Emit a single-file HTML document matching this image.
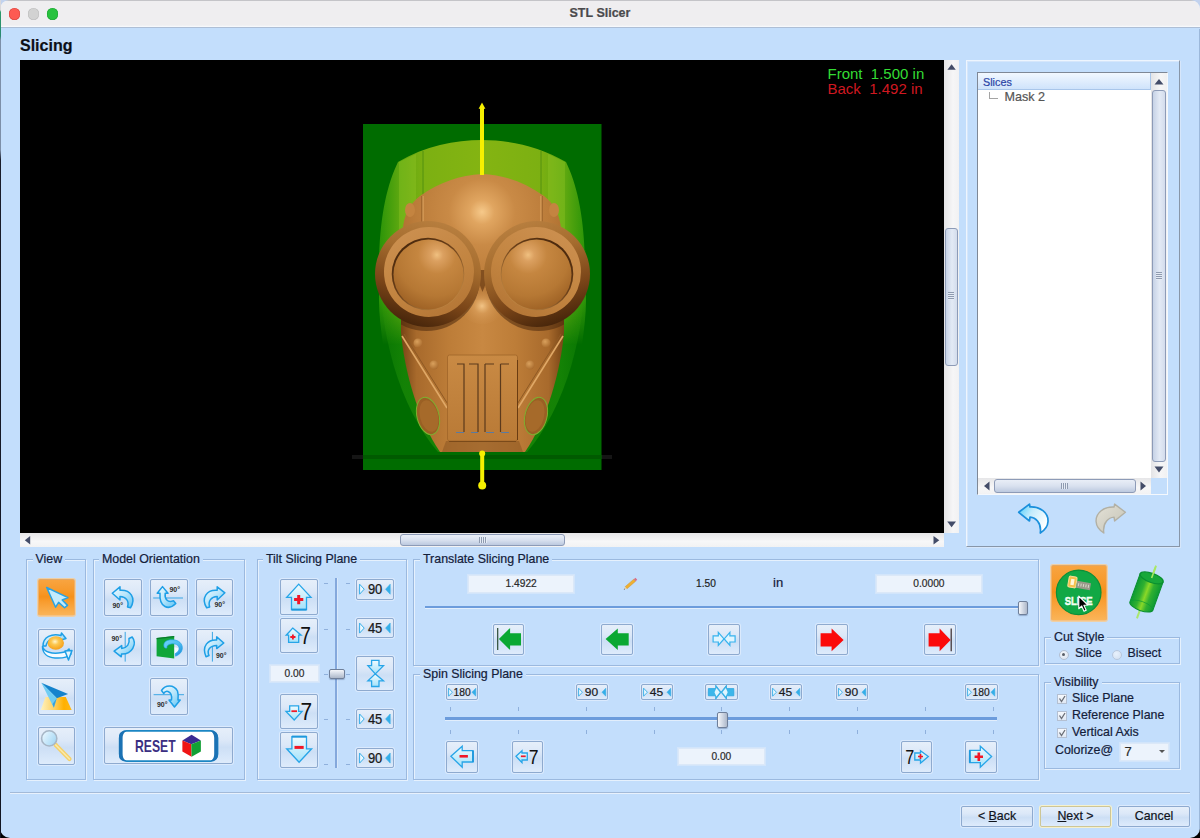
<!DOCTYPE html>
<html>
<head>
<meta charset="utf-8">
<title>STL Slicer</title>
<style>
html,body{margin:0;padding:0;}
body{width:1200px;height:838px;overflow:hidden;background:linear-gradient(#c2d2ee 0,#c2d2ee 20px,#000 20px);font-family:"Liberation Sans",sans-serif;font-size:12.4px;color:#14203a;-webkit-text-stroke:0.2px;}
#win{position:absolute;left:0;top:0;width:1200px;height:838px;background:#c3defc;border-radius:9px 9px 10px 10px;overflow:hidden;}
#edge{position:absolute;left:0;top:0;width:1px;height:838px;background:linear-gradient(#d8d8dc 0,#d8d8dc 10px,#2a9a6a 12px,#2a8a70 36px,#7d8fa8 40px,#7d8fa8 150px,#1a1d2a 160px,#111522 100%);z-index:5;}
#title{position:absolute;left:0;top:0;width:1200px;height:28px;background:linear-gradient(#c4c4c8 0,#c4c4c8 1px,#efeef0 1px,#efeef0 25px,#f6f8fb 26.500px,#aebfd6 27.500px,#aebfd6 28px);box-sizing:border-box;}
#title .t{position:absolute;left:0;width:1200px;top:6px;text-align:center;font-weight:bold;font-size:12.500px;color:#4a4a4c;}
.dot{position:absolute;top:8.300px;width:11.600px;height:11.600px;border-radius:50%;}
.abs{position:absolute;}
.grp{position:absolute;border:1px solid #9bb9df;box-shadow:1px 1px 0 #e6f1fd, inset 1px 1px 0 #e6f1fd;box-sizing:border-box;}
.grp>.lbl{position:absolute;top:-8.300px;background:#c3defc;padding:0 3px;font-size:12.4px;line-height:15px;white-space:nowrap;color:#14203a;}
.btn{position:absolute;box-sizing:border-box;border:1px solid #8eaacf;border-radius:2px;background:linear-gradient(#e6effa 0%,#dce8f8 35%,#cddff5 55%,#d6e6f9 80%,#deebfb 100%);box-shadow:0 0 0 1px rgba(230,240,253,.7);}
.btn svg{position:absolute;left:-1px;top:-1px;overflow:visible;}
.fld{position:absolute;box-sizing:border-box;background:#ecf3fc;border:1px solid #dbe8f8;box-shadow:0 0 0 1px #d2e5fb;font-size:10.200px;text-align:center;color:#2a2a2a;}
.tick{position:absolute;background:#8fb0dc;}
.txt{position:absolute;white-space:nowrap;line-height:15px;}
.vth{box-sizing:border-box;border:1px solid #8d9bb7;border-radius:3px;background:linear-gradient(90deg,#c6d2e6,#e3eaf5 55%,#d3dcec);}
.hth{box-sizing:border-box;border:1px solid #8d9bb7;border-radius:3px;background:linear-gradient(#e9eef7,#d9e1ef 50%,#bcc9df);}
.thumb{box-sizing:border-box;border:1px solid #6f7f99;border-radius:2px;background:linear-gradient(90deg,#f4f6fa,#c9d1de 60%,#aeb8c9);box-shadow:0 1px 1px rgba(60,80,120,.35);}
.radio{box-sizing:border-box;width:10px;height:10px;border-radius:50%;background:radial-gradient(circle at 40% 35%,#f4f8fd,#d6dfec);border:1px solid #b4c0d2;}
.radio i{position:absolute;left:2.200px;top:2.200px;width:3.600px;height:3.600px;border-radius:50%;background:#5a5f68;}
.chk{box-sizing:border-box;width:10px;height:10px;background:linear-gradient(#f6f9fd,#e0e8f3);border:1px solid #b4c0d2;}
.chk svg{position:absolute;left:-1px;top:-1px;}
.fb{font-size:12.4px;text-align:center;line-height:19px;color:#10141c;}
</style>
</head>
<body>
<div id="win">
<svg width="0" height="0" style="position:absolute;left:0;top:0"><defs><linearGradient id="ab" x1="0" y1="0" x2="1" y2="1"><stop offset="0" stop-color="#eefaff"/><stop offset="0.500" stop-color="#b9e6fb"/><stop offset="1" stop-color="#5fc4f4"/></linearGradient><linearGradient id="ab2" x1="0" y1="0" x2="1" y2="1"><stop offset="0" stop-color="#6fd4fa"/><stop offset="0.500" stop-color="#4fbff2"/><stop offset="1" stop-color="#1a8ad8"/></linearGradient><linearGradient id="ur" x1="0" y1="0" x2="1" y2="0.600"><stop offset="0" stop-color="#48ccfa"/><stop offset="0.450" stop-color="#c4ecfc"/><stop offset="1" stop-color="#ffffff"/></linearGradient><linearGradient id="hb" x1="0" y1="0" x2="0" y2="1"><stop offset="0" stop-color="#f0fbff"/><stop offset="0.500" stop-color="#c9eefc"/><stop offset="1" stop-color="#a4e2fa"/></linearGradient><linearGradient id="gr" x1="0" y1="0" x2="1" y2="1"><stop offset="0" stop-color="#e4e2d8"/><stop offset="1" stop-color="#c4c2b4"/></linearGradient><radialGradient id="orb" cx="0.450" cy="0.400" r="0.650"><stop offset="0" stop-color="#fff6d0"/><stop offset="0.350" stop-color="#fcc850"/><stop offset="1" stop-color="#f59a10"/></radialGradient><linearGradient id="org" x1="0" y1="0" x2="1" y2="0"><stop offset="0" stop-color="#fff2c0"/><stop offset="0.450" stop-color="#fdd060"/><stop offset="0.750" stop-color="#ffb000"/><stop offset="1" stop-color="#ffb818"/></linearGradient><linearGradient id="lens" x1="0" y1="0" x2="1" y2="0.600"><stop offset="0" stop-color="#f2faff"/><stop offset="0.600" stop-color="#c4e6fa"/><stop offset="1" stop-color="#a8d8f4"/></linearGradient><linearGradient id="cylg" x1="0" y1="0" x2="1" y2="0"><stop offset="0" stop-color="#0c9a34"/><stop offset="0.300" stop-color="#30b030"/><stop offset="0.500" stop-color="#8ad828"/><stop offset="0.700" stop-color="#30b030"/><stop offset="1" stop-color="#0c9a34"/></linearGradient></defs></svg>
<div id="title">
  <div class="dot" style="left:8.500px;background:#fd5a52;box-shadow:inset 0 0 0 0.600px #d8453e;"></div>
  <div class="dot" style="left:27.500px;background:#d2d2d2;box-shadow:inset 0 0 0 0.600px #bdbdbd;"></div>
  <div class="dot" style="left:46.700px;background:#27c23e;box-shadow:inset 0 0 0 0.600px #1da533;"></div>
  <div class="t">STL Slicer</div>
</div>
<div class="txt" style="left:20px;top:36px;font-size:16px;font-weight:bold;line-height:20px;color:#0c0f18;">Slicing</div>
<div id="vp" class="abs" style="left:20px;top:60px;width:925px;height:473px;background:#000;overflow:hidden;">
<svg width="925" height="473" viewBox="20 60 925 473" style="position:absolute;left:0;top:0">
<defs>
<linearGradient id="domeg" x1="0" x2="1" y1="0" y2="0">
 <stop offset="0" stop-color="#2a9408"/><stop offset="0.100" stop-color="#5ea810"/><stop offset="0.220" stop-color="#7cb012"/><stop offset="0.500" stop-color="#84b412"/><stop offset="0.780" stop-color="#7cb012"/><stop offset="0.900" stop-color="#5ea810"/><stop offset="1" stop-color="#2a9408"/>
</linearGradient>
<linearGradient id="sideg" x1="0" x2="1" y1="0" y2="0">
 <stop offset="0" stop-color="#0f7e05"/><stop offset="0.120" stop-color="#2c9c0c"/><stop offset="0.500" stop-color="#3aa510"/><stop offset="0.880" stop-color="#2c9c0c"/><stop offset="1" stop-color="#0f7e05"/>
</linearGradient>
<radialGradient id="headg" cx="482" cy="212" r="95" gradientUnits="userSpaceOnUse">
 <stop offset="0" stop-color="#f6c98a"/><stop offset="0.130" stop-color="#e0a560"/><stop offset="0.350" stop-color="#c98a46"/><stop offset="0.700" stop-color="#bb7c3a"/><stop offset="1" stop-color="#a86a2c"/>
</radialGradient>
<linearGradient id="faceg" x1="400" x2="565" y1="0" y2="0" gradientUnits="userSpaceOnUse">
 <stop offset="0" stop-color="#744214"/><stop offset="0.100" stop-color="#a86a2c"/><stop offset="0.300" stop-color="#bd7d38"/><stop offset="0.500" stop-color="#c88842"/><stop offset="0.700" stop-color="#bd7d38"/><stop offset="0.900" stop-color="#a86a2c"/><stop offset="1" stop-color="#744214"/>
</linearGradient>
<linearGradient id="ringg" x1="0.700" y1="0" x2="0.350" y2="1">
 <stop offset="0" stop-color="#b98040"/><stop offset="0.350" stop-color="#a56c2e"/><stop offset="0.700" stop-color="#7a4518"/><stop offset="1" stop-color="#45240a"/>
</linearGradient>
<linearGradient id="flatg" x1="0.200" y1="0" x2="0.700" y2="1">
 <stop offset="0" stop-color="#cc9050"/><stop offset="0.600" stop-color="#c28440"/><stop offset="1" stop-color="#b47636"/>
</linearGradient>
<radialGradient id="lensg" cx="0.620" cy="0.220" r="0.900">
 <stop offset="0" stop-color="#f0c080"/><stop offset="0.100" stop-color="#dba060"/><stop offset="0.300" stop-color="#c58640"/><stop offset="0.650" stop-color="#b67834"/><stop offset="1" stop-color="#95591f"/>
</radialGradient>
<radialGradient id="noseg" cx="482" cy="306" r="22" gradientUnits="userSpaceOnUse">
 <stop offset="0" stop-color="#f2c486"/><stop offset="0.350" stop-color="#d89c58" stop-opacity="0.800"/><stop offset="1" stop-color="#c98a46" stop-opacity="0"/>
</radialGradient>
<radialGradient id="rivg" cx="0.400" cy="0.350" r="0.700">
 <stop offset="0" stop-color="#d9a05c"/><stop offset="1" stop-color="#a86a2c"/>
</radialGradient>
<linearGradient id="grillg" x1="0" x2="0" y1="0" y2="1">
 <stop offset="0" stop-color="#c98a44"/><stop offset="1" stop-color="#b97a36"/>
</linearGradient>
<linearGradient id="dfade" x1="0" x2="0" y1="140" y2="345" gradientUnits="userSpaceOnUse"><stop offset="0" stop-color="#fff"/><stop offset="0.780" stop-color="#fff"/><stop offset="1" stop-color="#000"/></linearGradient>
<mask id="dmask" maskUnits="userSpaceOnUse" x="360" y="120" width="250" height="240"><rect x="360" y="120" width="250" height="240" fill="url(#dfade)"/></mask>
<linearGradient id="outg" x1="0.150" y1="0.100" x2="0.850" y2="0.900"><stop offset="0" stop-color="#4a280c"/><stop offset="0.450" stop-color="#6e421a"/><stop offset="1" stop-color="#c08844"/></linearGradient>
<clipPath id="faceclip"><path d="M404 240 C400 222 408 205 420 196 C440 182 460 175 482 174 C504 175 524 182 544 196 C556 205 564 222 560 240 L560 300 L404 300 Z"/><path d="M401 300 L401 332 C404 370 418 420 440 452 L525 452 C547 420 561 370 564 332 L564 300 Z"/></clipPath>
<clipPath id="gclip"><rect x="363" y="124" width="238.500" height="346"/></clipPath>
</defs>
<!-- shadow band -->
<rect x="352" y="455" width="260" height="4" fill="#151515"/>
<!-- slice plane -->
<rect x="363" y="124" width="238.500" height="346" fill="#006c00"/>
<!-- lower translucent sides -->
<path d="M379 250 C378 330 398 405 438 452 L527 452 C567 405 587 330 586 250 Z" fill="url(#sideg)" opacity="0.450"/>
<!-- dome translucent -->
<path d="M379 262 C380 215 387 185 398 162 C425 146 455 140 482 140 C509 140 539 146 566 162 C577 185 584 215 585 262 L586 300 C586 315 584 330 582 345 L383 345 C381 330 379 315 379 300 Z" fill="url(#domeg)" mask="url(#dmask)"/>
<path d="M399 162 L416 154 L416 240 L399 240 Z" fill="#96c828" opacity="0.350"/>
<path d="M548 154 L565 162 L565 240 L548 240 Z" fill="#96c828" opacity="0.350"/>
<line x1="423" y1="151" x2="423" y2="225" stroke="#4a8a10" stroke-width="0.800"/>
<line x1="541" y1="151" x2="541" y2="225" stroke="#4a8a10" stroke-width="0.800"/>
<rect x="363" y="455" width="238.500" height="4" fill="#005a00"/>
<!-- head dome -->
<path d="M404 240 C400 222 408 205 420 196 C440 182 460 175 482 174 C504 175 524 182 544 196 C556 205 564 222 560 240 L560 300 L404 300 Z" fill="url(#headg)"/>
<ellipse cx="410" cy="210" rx="5" ry="7" fill="#c48440"/>
<ellipse cx="554" cy="210" rx="5" ry="7" fill="#c48440"/>
<line x1="423" y1="196" x2="423" y2="222" stroke="#e2aa66" stroke-width="1"/>
<line x1="421.800" y1="196" x2="421.800" y2="222" stroke="#8a5622" stroke-width="0.700"/>
<line x1="541" y1="196" x2="541" y2="222" stroke="#e2aa66" stroke-width="1"/>
<line x1="542.200" y1="196" x2="542.200" y2="222" stroke="#8a5622" stroke-width="0.700"/>
<!-- lower face -->
<path d="M401 300 L401 332 C404 370 418 420 440 452 L525 452 C547 420 561 370 564 332 L564 300 Z" fill="url(#faceg)"/>
<ellipse cx="482" cy="306" rx="22" ry="18" fill="url(#noseg)"/>
<!-- straps -->
<path d="M402 336 L447 408" stroke="#e0a866" stroke-width="1.600" fill="none"/>
<path d="M404 334 L449 406" stroke="#8f5a24" stroke-width="1" fill="none"/>
<path d="M563 336 L518 408" stroke="#e0a866" stroke-width="1.600" fill="none"/>
<path d="M561 334 L516 406" stroke="#8f5a24" stroke-width="1" fill="none"/>
<!-- rivets -->
<circle cx="418" cy="343" r="4.500" fill="url(#rivg)"/><circle cx="434" cy="365" r="4.500" fill="url(#rivg)"/>
<circle cx="546" cy="343" r="4.500" fill="url(#rivg)"/><circle cx="530" cy="365" r="4.500" fill="url(#rivg)"/>
<!-- side ovals -->
<ellipse cx="428" cy="416" rx="11" ry="19" transform="rotate(-14 428 416)" fill="#9a6024" stroke="#7fae30" stroke-width="1"/>
<ellipse cx="536" cy="416" rx="11" ry="19" transform="rotate(14 536 416)" fill="#9a6024" stroke="#7fae30" stroke-width="1"/>
<ellipse cx="429" cy="416" rx="9" ry="16" transform="rotate(-14 429 416)" fill="#a66a2a"/>
<ellipse cx="535" cy="416" rx="9" ry="16" transform="rotate(14 535 416)" fill="#a66a2a"/>
<!-- grille -->
<path d="M446 441 L519 441 L523 452 L442 452 Z" fill="#8a5622" opacity="0.550"/>
<rect x="447.500" y="355" width="70" height="86" rx="2" fill="url(#grillg)" stroke="#a06428" stroke-width="0.800"/>
<line x1="517.500" y1="360" x2="517.500" y2="440" stroke="#6a3c12" stroke-width="1"/>
<line x1="449" y1="441.500" x2="516" y2="441.500" stroke="#7a4a1a" stroke-width="1.200"/>
<g stroke="#5c3a1c" stroke-width="1.200" fill="none">
<path d="M457 364 L464 364 L464 432"/><path d="M469 364 L478 364 L478 432"/><path d="M485 364 L485 432 M485 364 L494 364"/><path d="M500.500 364 L500.500 432 M500.500 364 L509 364"/>
</g>
<path d="M456 432.500 L464 432.500 M471 432.500 L478 432.500 M486 432.500 L494 432.500 M501 432.500 L509 432.500" stroke="#5a7aa0" stroke-width="1.200"/>
<path d="M474 270 L482.500 292 L491 270 Z" fill="#6a3c14" opacity="0.700"/>
<!-- goggles -->
<circle cx="426.500" cy="277.500" r="53.500" fill="#4a280c" opacity="0.550" clip-path="url(#faceclip)"/>
<circle cx="538.500" cy="277.500" r="53.500" fill="#4a280c" opacity="0.550" clip-path="url(#faceclip)"/>
<g id="gog">
<circle cx="428" cy="274" r="53" fill="url(#ringg)"/>
<circle cx="429" cy="272" r="45" fill="url(#flatg)"/>
<circle cx="428" cy="274" r="36.300" fill="url(#outg)"/>
<circle cx="428.500" cy="274.500" r="35" fill="url(#lensg)"/>
</g>
<g transform="translate(965 0) scale(-1 1)">
<circle cx="428" cy="274" r="53" fill="url(#ringg)"/>
<circle cx="429" cy="272" r="45" fill="url(#flatg)"/>
<circle cx="428" cy="274" r="36.300" fill="url(#outg)"/>
<circle cx="428.500" cy="274.500" r="35" fill="url(#lensg)"/>
</g>
<!-- axis -->
<rect x="480" y="107" width="4" height="68" fill="#f6f000"/>
<path d="M478.600 108.800 L482 102.600 L485.400 108.800 Z" fill="#f6f000"/>
<rect x="480.200" y="452" width="4" height="34" fill="#f6f000"/>
<circle cx="482.200" cy="485.500" r="4" fill="#f6f000"/><circle cx="482.200" cy="453.500" r="3" fill="#f6f000"/>
<text x="827.500" y="78.700" font-family="Liberation Sans, sans-serif" font-size="15" fill="#34dc34" xml:space="preserve">Front  1.500 in</text>
<text x="827.500" y="93.800" font-family="Liberation Sans, sans-serif" font-size="15" fill="#d01820" xml:space="preserve">Back  1.492 in</text>
</svg>

</div>

<div class="abs" style="left:944px;top:60px;width:15px;height:473px;background:linear-gradient(90deg,#e4e4e6,#f6f6f7 60%,#f1f1f2);"></div>
<svg class="abs" style="left:944px;top:60px" width="15" height="473"><path d="M3.400 9.700 L7.600 4.300 L11.800 9.700 Z" fill="#434c68"/><path d="M3.200 461.600 L7.600 467.200 L12 461.600 Z" fill="#434c68"/></svg>
<div class="abs vth" style="left:945px;top:228px;width:13px;height:138px;"></div>
<div class="abs" style="left:948px;top:292px;width:6px;height:8px;background:repeating-linear-gradient(#8f9bb0 0,#8f9bb0 1px,#e6ecf5 1px,#e6ecf5 2px);"></div>
<div class="abs" style="left:20px;top:533px;width:924px;height:14px;background:linear-gradient(#e6e6e8,#f7f7f8 60%,#f2f2f3);"></div>
<svg class="abs" style="left:20px;top:533px" width="924" height="14"><path d="M10.200 3 L4.800 7.300 L10.200 11.600 Z" fill="#434c68"/><path d="M913.500 3 L919.300 7.300 L913.500 11.600 Z" fill="#434c68"/></svg>
<div class="abs hth" style="left:400px;top:534px;width:165px;height:12px;"></div>
<div class="abs" style="left:479px;top:537px;width:8px;height:6px;background:repeating-linear-gradient(90deg,#8f9bb0 0,#8f9bb0 1px,#e6ecf5 1px,#e6ecf5 2px);"></div>


<div class="abs" style="left:966px;top:60px;width:214px;height:486.500px;box-sizing:border-box;border:1px solid;border-color:#eef5fe #8896a8 #8896a8 #eef5fe;box-shadow:inset 1px 1px 0 #d5e6fb,1px 1px 0 #d6e6fa;"></div>
<div class="abs" style="left:977px;top:72px;width:191px;height:423px;box-sizing:border-box;background:#fff;border:1px solid;border-color:#7f8896 #f4f8fd #f4f8fd #7f8896;"></div>
<div class="abs" style="left:978px;top:73px;width:173px;height:17px;box-sizing:border-box;background:linear-gradient(#f2f8ff,#cfe3fb);border-bottom:1px solid #a9c6ea;border-right:1px solid #a9c6ea;"></div>
<div class="txt" style="left:983px;top:75px;font-size:10.800px;color:#2a44a6;">Slices</div>
<div class="abs" style="left:988.500px;top:91.500px;width:1px;height:6.500px;background:#a4a4a4;"></div>
<div class="abs" style="left:988.500px;top:97.500px;width:9px;height:1px;background:#a4a4a4;"></div>
<div class="txt" style="left:1004.500px;top:90px;font-size:12.600px;color:#555;">Mask 2</div>
<div class="abs" style="left:1151px;top:73px;width:16px;height:405px;background:linear-gradient(90deg,#e4e4e6,#f6f6f7 60%,#f1f1f2);"></div>
<svg class="abs" style="left:1151px;top:73px" width="16" height="405"><path d="M3.500 11.500 L8 6 L12.500 11.500 Z" fill="#434c68"/><path d="M3.500 393.500 L8 399.500 L12.500 393.500 Z" fill="#434c68"/></svg>
<div class="abs vth" style="left:1152px;top:90px;width:14px;height:372px;"></div>
<div class="abs" style="left:1156px;top:272px;width:6px;height:8px;background:repeating-linear-gradient(#8f9bb0 0,#8f9bb0 1px,#e6ecf5 1px,#e6ecf5 2px);"></div>
<div class="abs" style="left:978px;top:478px;width:173px;height:16px;background:linear-gradient(#e6e6e8,#f7f7f8 60%,#f2f2f3);"></div>
<svg class="abs" style="left:978px;top:478px" width="173" height="16"><path d="M11.500 3.500 L6 8 L11.500 12.500 Z" fill="#434c68"/><path d="M162.500 3.500 L168 8 L162.500 12.500 Z" fill="#434c68"/></svg>
<div class="abs hth" style="left:994px;top:479px;width:142px;height:14px;"></div>
<div class="abs" style="left:1061px;top:483px;width:7px;height:6px;background:repeating-linear-gradient(90deg,#8f9bb0 0,#8f9bb0 1px,#e6ecf5 1px,#e6ecf5 2px);"></div>
<div class="abs" style="left:1151px;top:478px;width:16px;height:16px;background:#c3defc;"></div>
<svg class="abs" style="left:1012px;top:498px" width="124" height="42" viewBox="1012 498 124 42"><path d="M1018.700 512.300 L1029.500 504.100 L1030 507 C1040 506.500 1048.500 512.500 1048 521.500 C1047.800 526 1045 530 1040.300 533 C1041 528 1040 524 1037.500 521 C1035.500 518.500 1033 517.300 1030 517.100 L1029.500 521 Z" fill="url(#ur)" stroke="#1b90dc" stroke-width="1.700" stroke-linejoin="round"/><path d="M1125.400 512.300 L1114.600 504.100 L1114.100 507.000 C1104.100 506.500 1095.600 512.500 1096.100 521.500 C1096.300 526.000 1099.100 530.000 1103.800 533.000 C1103.100 528.000 1104.100 524.000 1106.600 521.000 C1108.600 518.500 1111.100 517.300 1114.100 517.100 L1114.600 521.000 Z" fill="url(#gr)" stroke="#b2b0a4" stroke-width="1.400" stroke-linejoin="round"/></svg>
<div class="grp" style="left:26px;top:559px;width:60px;height:221px;"><div class="lbl" style="left:5.5px;">View</div></div>
<div class="grp" style="left:93px;top:559px;width:152px;height:221px;"><div class="lbl" style="left:5px;">Model Orientation</div></div>
<div class="grp" style="left:257px;top:559px;width:150px;height:221px;"><div class="lbl" style="left:5px;">Tilt Slicing Plane</div></div>
<div class="grp" style="left:413px;top:559px;width:626px;height:107px;"><div class="lbl" style="left:6px;">Translate Slicing Plane</div></div>
<div class="grp" style="left:413px;top:674px;width:626px;height:106px;"><div class="lbl" style="left:6px;">Spin Slicing Plane</div></div>
<div class="grp" style="left:1044px;top:637px;width:136px;height:27px;"><div class="lbl" style="left:6px;">Cut Style</div></div>
<div class="grp" style="left:1044px;top:682px;width:136px;height:87px;"><div class="lbl" style="left:6px;">Visibility</div></div>
<div class="btn" style="left:37.6px;top:578.8px;width:37.6px;height:37.4px;background:linear-gradient(#f8a440,#f79a2c 30%,#f6911b 48%,#f89c2e 62%,#fab458);border-color:#e2a866 #eeb06a #f6c283 #eeb06a;box-shadow:0 0 0 1px #f0cfa4;"><svg width="37.6" height="37.4" viewBox="0 0 37.6 37.4"><path d="M8.700 8.500 L30 18.600 L24.200 21 L29.500 26.400 L26.600 28.800 L20.600 23.400 L17.600 28.200 Z" fill="#c4ebfc" stroke="#2aa2e2" stroke-width="1.500" stroke-linejoin="round"/></svg></div>
<div class="btn" style="left:37.6px;top:628.7px;width:37.6px;height:37.4px;"><svg width="37.6" height="37.4" viewBox="0 0 37.6 37.4"><path d="M5 17 C5 8 14 4 23 6.500 L23.500 4 L28 9.500 L21.500 11.500 L22 9.200 C15 8 9 11 8 17 Z" fill="url(#ab)" stroke="#1e9fe6" stroke-width="1.500" stroke-linejoin="round"/><ellipse cx="17.800" cy="14" rx="8.200" ry="6.800" fill="url(#orb)"/><path d="M4.500 17.500 C6 23 14 25.500 24 23.500 C27 23 30 21.500 31 20 L33 25 C30 28 24 29.500 17 29 C9 28.500 4.500 24 4.500 17.500 Z" fill="#f4fbff" stroke="#1e9fe6" stroke-width="1.500" stroke-linejoin="round"/><path d="M27 22 L34 21.500 L30.500 31 Z" fill="#e4f6fe" stroke="#1e9fe6" stroke-width="1.500" stroke-linejoin="round"/></svg></div>
<div class="btn" style="left:37.6px;top:678px;width:37.6px;height:37.4px;"><svg width="37.6" height="37.4" viewBox="0 0 37.6 37.4"><path d="M7.500 19 L27.800 19 L33.700 32 L2.700 32 Z" fill="url(#org)"/><path d="M3.300 4.700 L30.100 16 L18.800 20.200 Z" fill="#1583cc"/><path d="M3.300 4.700 L18.800 20.200 L15.800 29.800 Z" fill="#6fcdf3"/><path d="M18.800 20.200 L15.800 29.800 L14.500 26 Z" fill="#1583cc" opacity="0.600"/></svg></div>
<div class="btn" style="left:37.6px;top:727.3px;width:37.6px;height:37.4px;"><svg width="37.6" height="37.4" viewBox="0 0 37.6 37.4"><path d="M17.500 17.800 L31.500 32" stroke="#f4d06a" stroke-width="4.200" stroke-linecap="round"/><path d="M17.500 17.800 L31.500 32" stroke="#fbe9a8" stroke-width="1.600" stroke-linecap="round"/><circle cx="11.200" cy="11.400" r="7.600" fill="url(#lens)" stroke="#a7b6c6" stroke-width="1.600"/></svg></div>
<div class="btn" style="left:104.4px;top:578.8px;width:37.2px;height:37px;"><svg width="37.2" height="37" viewBox="0 0 37.2 37"><path d="M8.300 14.300 L16 7.800 L16 11.300 C26.500 10.500 32.500 19 26.500 28.800 L23.500 28 C25.500 22 22 17.800 16 17.600 L16 21 Z" fill="url(#ab)" stroke="#1e9fe6" stroke-width="1.500" stroke-linejoin="round"/><text x="8.5" y="29" font-family="Liberation Sans, sans-serif" font-weight="bold" font-size="7" fill="#2a2a2a" textLength="10.500" lengthAdjust="spacingAndGlyphs">90°</text></svg></div>
<div class="btn" style="left:150.4px;top:578.8px;width:37.2px;height:37px;"><svg width="37.2" height="37" viewBox="0 0 37.2 37"><path d="M3.200 19 L33 19" stroke="#3aa6e4" stroke-width="1"/><path d="M12.500 7.600 L18 14.300 L15.200 14.300 C14.500 20 17.500 24 23.500 21.800 L25.800 24.500 C19 31.500 9 29 10 14.300 L7.200 14.300 Z" fill="url(#ab)" stroke="#1e9fe6" stroke-width="1.500" stroke-linejoin="round"/><text x="19.5" y="13" font-family="Liberation Sans, sans-serif" font-weight="bold" font-size="7" fill="#2a2a2a" textLength="10.500" lengthAdjust="spacingAndGlyphs">90°</text></svg></div>
<div class="btn" style="left:196px;top:578.8px;width:37.2px;height:37px;"><svg width="37.2" height="37" viewBox="0 0 37.2 37"><path d="M28.900 13.800 L21.200 7.800 L21.200 11.300 C10.700 10.500 4.700 19 10.700 28.800 L13.700 28 C11.700 22 15.200 17.800 21.200 17.600 L21.200 21 Z" fill="url(#ab)" stroke="#1e9fe6" stroke-width="1.500" stroke-linejoin="round"/><text x="18.5" y="28.5" font-family="Liberation Sans, sans-serif" font-weight="bold" font-size="7" fill="#2a2a2a" textLength="10.500" lengthAdjust="spacingAndGlyphs">90°</text></svg></div>
<div class="btn" style="left:104.4px;top:628.7px;width:37.2px;height:37px;"><svg width="37.2" height="37" viewBox="0 0 37.2 37"><path d="M21.200 2.900 L21.200 32.600" stroke="#3aa6e4" stroke-width="1"/><path d="M10.100 22.100 L17.700 16.600 L17.700 19.500 C23 19 26 15 25 9.500 L28.200 8 C33.500 15 28 25.500 17.500 25 L17.300 27.800 Z" fill="url(#ab)" stroke="#1e9fe6" stroke-width="1.500" stroke-linejoin="round"/><text x="7.5" y="12.5" font-family="Liberation Sans, sans-serif" font-weight="bold" font-size="7" fill="#2a2a2a" textLength="10.500" lengthAdjust="spacingAndGlyphs">90°</text></svg></div>
<div class="btn" style="left:150.4px;top:628.7px;width:37.2px;height:37px;"><svg width="37.2" height="37" viewBox="0 0 37.2 37"><path d="M6.600 9.100 L24.200 7.100 L24.200 29.400 L6.600 27.300 Z" fill="#10a63a"/><path d="M6.600 9.100 L24.200 7.100 L24.200 8.300 L6.600 10.300 Z" fill="#0a7a2a"/><path d="M24.600 18.300 L30.400 19.500 C29.800 22.800 27.600 25 24.600 26.600 Z" fill="#f4fbff"/><path d="M14 17.500 C13 13 17 10.500 23 10.800 C29 11 33 15 32.300 20 C31.800 23.500 29 26 25.600 27.200 L25 24.800 C28 23 29.500 21 29 18.500 C28 15 24 14.500 21 15 C18 15.500 16.500 17 17 19 C15.500 19.500 14.300 18.800 14 17.500 Z" fill="url(#ab2)" stroke="#1e9fe6" stroke-width="0.600"/></svg></div>
<div class="btn" style="left:196px;top:628.7px;width:37.2px;height:37px;"><svg width="37.2" height="37" viewBox="0 0 37.2 37"><path d="M16.400 2.900 L16.400 32.600" stroke="#3aa6e4" stroke-width="1"/><path d="M27.800 14 L20.700 7.900 L20.700 11 C12 10.500 5.500 17 10 27.800 L13 26.500 C10.500 21 14 16.800 20.700 16.600 L20.700 19.600 Z" fill="url(#ab)" stroke="#1e9fe6" stroke-width="1.500" stroke-linejoin="round"/><text x="20" y="29.5" font-family="Liberation Sans, sans-serif" font-weight="bold" font-size="7" fill="#2a2a2a" textLength="10.500" lengthAdjust="spacingAndGlyphs">90°</text></svg></div>
<div class="btn" style="left:150.4px;top:678px;width:37.2px;height:37px;"><svg width="37.2" height="37" viewBox="0 0 37.2 37"><path d="M3.600 16.700 L34 16.700" stroke="#3aa6e4" stroke-width="1"/><path d="M11.500 12.500 C15 6.500 24 6 27.500 13 C28.500 16 28.300 19 28 22 L30.200 22 L24.500 29 L19 22 L21.500 22 C22 18 21 14.500 18 13.500 C16 13 14.500 14 13.800 15.500 Z" fill="url(#ab)" stroke="#1e9fe6" stroke-width="1.500" stroke-linejoin="round"/><text x="7" y="28.8" font-family="Liberation Sans, sans-serif" font-weight="bold" font-size="7" fill="#2a2a2a" textLength="10.500" lengthAdjust="spacingAndGlyphs">90°</text></svg></div>
<div class="btn" style="left:104.3px;top:727.2px;width:128.8px;height:37.3px;"><svg width="128.8" height="37.3" viewBox="0 0 128.8 37.3"><rect x="15.600" y="3.900" width="98" height="30.200" rx="7" fill="#fff" stroke="#1b86c4" stroke-width="1.600"/><path d="M22 3.700 C17 3.700 15 6 15 10 L15 28 C15 32 17 34.200 22 34.200 C19.500 32 18.600 30 18.600 27 L18.600 11 C18.600 8 19.500 6 22 3.700 Z" fill="#1b72b4"/><path d="M106.800 3.700 C111.800 3.700 113.800 6 113.800 10 L113.800 28 C113.800 32 111.800 34.200 106.800 34.200 C109.300 32 110.200 30 110.200 27 L110.200 11 C110.200 8 109.300 6 106.800 3.700 Z" fill="#1b72b4"/><text x="31" y="24.700" font-family="Liberation Sans, sans-serif" font-weight="bold" font-size="15.600" fill="#3b2f82" textLength="40.600" lengthAdjust="spacingAndGlyphs">RESET</text><path d="M87.600 7.800 L96.900 13.400 L87.300 17.300 L78.400 13.400 Z" fill="#3b2b92"/><path d="M78.400 13.400 L87.300 17.300 L87.600 29.800 L78.400 24.500 Z" fill="#f01414"/><path d="M96.900 13.400 L87.300 17.300 L87.600 29.800 L96.900 24.500 Z" fill="#12a034"/></svg></div>
<div class="btn" style="left:280.2px;top:579.4px;width:37.4px;height:35.4px;"><svg width="37.4" height="35.4" viewBox="0 0 37.4 35.4"><path d="M18.700 5.100 L31 18.300 L26.500 18.300 L26.500 30.600 L11.500 30.600 L11.500 18.300 L6.700 18.300 Z" fill="url(#hb)" stroke="#27a5e8" stroke-width="1.300" stroke-linejoin="miter"/><path d="M11.500 30.600 L26.500 30.600" stroke="#1e98dc" stroke-width="2"/><path d="M14.1 20.6 L23.299999999999997 20.6 M18.7 16.0 L18.7 25.200000000000003" stroke="#f01828" stroke-width="3"/></svg></div>
<div class="btn" style="left:280.2px;top:618px;width:37.4px;height:35.2px;"><svg width="37.4" height="35.2" viewBox="0 0 37.4 35.2"><path d="M12.700 10.100 L21.100 17.200 L18.700 17.200 L18.700 24.400 L8.600 24.400 L8.600 17.200 L6.200 17.200 Z" fill="url(#hb)" stroke="#27a5e8" stroke-width="1.300" stroke-linejoin="miter"/><path d="M10.3 19 L15.5 19 M12.9 16.4 L12.9 21.6" stroke="#f01828" stroke-width="1.8"/><text x="20.3" y="26.2" font-family="Liberation Sans, sans-serif" font-size="24.2" fill="#111" textLength="10.6" lengthAdjust="spacingAndGlyphs">7</text></svg></div>
<div class="btn" style="left:280.2px;top:694px;width:37.4px;height:34.8px;"><svg width="37.4" height="34.8" viewBox="0 0 37.4 34.8"><path d="M9.700 11.900 L18.600 11.900 L18.600 17.400 L22.100 17.400 L14.200 26 L6 17.400 L9.700 17.400 Z" fill="url(#hb)" stroke="#27a5e8" stroke-width="1.300" stroke-linejoin="miter"/><path d="M11.399999999999999 17.2 L17.0 17.2" stroke="#f01828" stroke-width="1.8"/><text x="20.6" y="26" font-family="Liberation Sans, sans-serif" font-size="24" fill="#111" textLength="11.6" lengthAdjust="spacingAndGlyphs">7</text></svg></div>
<div class="btn" style="left:280.2px;top:732.3px;width:37.4px;height:35.5px;"><svg width="37.4" height="35.5" viewBox="0 0 37.4 35.5"><path d="M11.900 4.600 L26.500 4.600 L26.500 16.800 L31.600 16.800 L19.100 30.300 L6.700 16.800 L11.900 16.800 Z" fill="url(#hb)" stroke="#27a5e8" stroke-width="1.300" stroke-linejoin="miter"/><path d="M11.900 4.600 L26.500 4.600" stroke="#1e98dc" stroke-width="2"/><path d="M14.500000000000002 15.4 L23.700000000000003 15.4" stroke="#f01828" stroke-width="3"/></svg></div>
<div class="fld" style="left:270.2px;top:664.7px;width:48.500px;height:17.300px;line-height:15.500px;">0.00</div>
<div class="abs" style="left:335.2px;top:578px;width:2.300px;height:190px;background:#84a8dc;box-shadow:1px 0 0 #d8e8fb;"></div>
<div class="tick" style="left:324px;top:583px;width:4px;height:1px;"></div><div class="tick" style="left:345.500px;top:583px;width:4px;height:1px;"></div>
<div class="tick" style="left:324px;top:628.6px;width:4px;height:1px;"></div><div class="tick" style="left:345.500px;top:628.6px;width:4px;height:1px;"></div>
<div class="tick" style="left:324px;top:674px;width:4px;height:1px;"></div><div class="tick" style="left:345.500px;top:674px;width:4px;height:1px;"></div>
<div class="tick" style="left:324px;top:719px;width:4px;height:1px;"></div><div class="tick" style="left:345.500px;top:719px;width:4px;height:1px;"></div>
<div class="tick" style="left:324px;top:763.6px;width:4px;height:1px;"></div><div class="tick" style="left:345.500px;top:763.6px;width:4px;height:1px;"></div>
<div class="abs thumb" style="left:329.2px;top:668.9px;width:15.600px;height:10.200px;background:linear-gradient(#f4f6fa,#c9d1de 60%,#aeb8c9);"></div>
<div class="btn" style="left:356.2px;top:579.4px;width:37.6px;height:20.4px;"><svg width="37.6" height="20.4" viewBox="0 0 37.6 20.4"><path d="M3.600 5.199999999999999 L8.200 10.2 L3.600 15.2 Z" fill="#eaf8ff" stroke="#35aee8" stroke-width="1"/><path d="M34.2 5.199999999999999 L29.6 10.2 L34.2 15.2 Z" fill="#35aee8" stroke="#35aee8" stroke-width="0.600"/><text x="11.9" y="15.3" font-family="Liberation Sans, sans-serif" font-size="14.2" fill="#1a1a1a" stroke="#1a1a1a" stroke-width="0.250" textLength="14.4" lengthAdjust="spacingAndGlyphs">90</text></svg></div>
<div class="btn" style="left:356.2px;top:617.9px;width:37.6px;height:20.2px;"><svg width="37.6" height="20.2" viewBox="0 0 37.6 20.2"><path d="M3.600 5.1 L8.200 10.1 L3.600 15.1 Z" fill="#eaf8ff" stroke="#35aee8" stroke-width="1"/><path d="M34.2 5.1 L29.6 10.1 L34.2 15.1 Z" fill="#35aee8" stroke="#35aee8" stroke-width="0.600"/><text x="11.9" y="15.2" font-family="Liberation Sans, sans-serif" font-size="14.2" fill="#1a1a1a" stroke="#1a1a1a" stroke-width="0.250" textLength="14.4" lengthAdjust="spacingAndGlyphs">45</text></svg></div>
<div class="btn" style="left:356.2px;top:656px;width:37.6px;height:35.2px;"><svg width="37.6" height="35.2" viewBox="0 0 37.6 35.2"><path d="M15.600 4.400 L23 4.400 L23 9.700 L27.500 9.700 L19.300 17.900 L11.900 9.700 L15.600 9.700 Z" fill="url(#hb)" stroke="#27a5e8" stroke-width="1.300" stroke-linejoin="miter"/><path d="M15.600 30.500 L23 30.500 L23 24.800 L27.500 24.800 L19.300 17.900 L11.900 24.800 L15.600 24.800 Z" fill="url(#hb)" stroke="#27a5e8" stroke-width="1.300" stroke-linejoin="miter"/></svg></div>
<div class="btn" style="left:356.2px;top:709.3px;width:37.6px;height:20px;"><svg width="37.6" height="20" viewBox="0 0 37.6 20"><path d="M3.600 5.0 L8.200 10.0 L3.600 15.0 Z" fill="#eaf8ff" stroke="#35aee8" stroke-width="1"/><path d="M34.2 5.0 L29.6 10.0 L34.2 15.0 Z" fill="#35aee8" stroke="#35aee8" stroke-width="0.600"/><text x="11.9" y="15.1" font-family="Liberation Sans, sans-serif" font-size="14.2" fill="#1a1a1a" stroke="#1a1a1a" stroke-width="0.250" textLength="14.4" lengthAdjust="spacingAndGlyphs">45</text></svg></div>
<div class="btn" style="left:356.2px;top:747.7px;width:37.6px;height:20.2px;"><svg width="37.6" height="20.2" viewBox="0 0 37.6 20.2"><path d="M3.600 5.1 L8.200 10.1 L3.600 15.1 Z" fill="#eaf8ff" stroke="#35aee8" stroke-width="1"/><path d="M34.2 5.1 L29.6 10.1 L34.2 15.1 Z" fill="#35aee8" stroke="#35aee8" stroke-width="0.600"/><text x="11.9" y="15.2" font-family="Liberation Sans, sans-serif" font-size="14.2" fill="#1a1a1a" stroke="#1a1a1a" stroke-width="0.250" textLength="14.4" lengthAdjust="spacingAndGlyphs">90</text></svg></div>
<div class="fld" style="left:468.2px;top:575px;width:106px;height:17.500px;line-height:15.500px;">1.4922</div>
<div class="fld" style="left:876.2px;top:575px;width:105.500px;height:17.500px;line-height:15.500px;">0.0000</div>
<div class="txt" style="left:696px;top:576px;font-size:10.200px;color:#222;">1.50</div>
<div class="txt" style="left:773px;top:574.500px;font-size:13px;">in</div>
<svg class="abs" style="left:622px;top:575px" width="18" height="16" viewBox="622 575 18 16"><g transform="rotate(-41 630.700 583.700)"><rect x="624.500" y="582.300" width="11.500" height="2.800" fill="#f0b030" stroke="#c48a20" stroke-width="0.400"/><path d="M624.500 582.300 L621.700 583.700 L624.500 585.100 Z" fill="#e8cfa0"/><path d="M622.700 583.200 L621.500 583.700 L622.700 584.200 Z" fill="#333"/><rect x="636" y="582.300" width="2.200" height="2.800" fill="#d87088"/></g></svg>
<div class="abs" style="left:424.500px;top:605.800px;width:598px;height:2.200px;background:#6c9cdc;box-shadow:0 1px 0 #e2eefc;"></div>
<div class="abs thumb" style="left:1017.800px;top:600.800px;width:10.400px;height:14.400px;"></div>
<div class="btn" style="left:492.7px;top:623.6px;width:31.8px;height:31.6px;"><svg width="31.8" height="31.6" viewBox="0 0 31.8 31.6"><path d="M4.700 3.900 L4.700 26.100" stroke="#2b4a34" stroke-width="1.200"/><path d="M5.900 14.900 L17.100 3.900 L17.100 9.300 L28 9.300 L28 21.400 L17.100 21.400 L17.100 26.100 Z" fill="#0aa832"/></svg></div>
<div class="btn" style="left:600.8px;top:623.6px;width:31.8px;height:31.6px;"><svg width="31.8" height="31.6" viewBox="0 0 31.8 31.6"><path d="M4.600 14.900 L16.800 4.400 L16.800 9.300 L27.700 9.300 L27.700 21.400 L16.800 21.400 L16.800 26.100 Z" fill="#0aa832"/></svg></div>
<div class="btn" style="left:708.3px;top:623.6px;width:31.8px;height:31.6px;"><svg width="31.8" height="31.6" viewBox="0 0 31.8 31.6"><path d="M5.100 11.800 L10.300 11.800 L10.300 8.300 L16 14.900 L10.300 21.500 L10.300 18 L5.100 18 Z" fill="#dff5ff" stroke="#35b2ee" stroke-width="1.200"/><path d="M27.100 11.800 L21.900 11.800 L21.900 8.300 L16.200 14.900 L21.900 21.500 L21.900 18 L27.100 18 Z" fill="#dff5ff" stroke="#35b2ee" stroke-width="1.200"/></svg></div>
<div class="btn" style="left:816.4px;top:623.6px;width:31.8px;height:31.6px;"><svg width="31.8" height="31.6" viewBox="0 0 31.8 31.6"><path d="M27.600 15.900 L15.600 4.600 L15.600 9.200 L4.600 9.200 L4.600 22.600 L15.600 22.600 L15.600 27.200 Z" fill="#fb0a0a"/></svg></div>
<div class="btn" style="left:924.4px;top:623.6px;width:31.8px;height:31.6px;"><svg width="31.8" height="31.6" viewBox="0 0 31.8 31.6"><path d="M27.200 4.600 L27.200 27.200" stroke="#3a2a2a" stroke-width="1.200"/><path d="M26.600 15.900 L15.600 4.600 L15.600 9.200 L4.600 9.200 L4.600 22.600 L15.600 22.600 L15.600 27.200 Z" fill="#fb0a0a"/></svg></div>
<div class="btn" style="left:446px;top:684px;width:32.2px;height:16.4px;"><svg width="32.2" height="16.4" viewBox="0 0 32.2 16.4"><path d="M2.600 4.199999999999999 L6.400 8.2 L2.600 12.2 Z" fill="#eaf8ff" stroke="#35aee8" stroke-width="0.900"/><path d="M29.800000000000004 4.199999999999999 L26.000000000000004 8.2 L29.800000000000004 12.2 Z" fill="#35aee8" stroke="#35aee8" stroke-width="0.500"/><text x="7.6" y="12.300" font-family="Liberation Sans, sans-serif" font-size="11.600" fill="#1a1a1a" stroke="#1a1a1a" stroke-width="0.200" textLength="17.2" lengthAdjust="spacingAndGlyphs">180</text></svg></div>
<div class="btn" style="left:576.1px;top:684px;width:32.2px;height:16.4px;"><svg width="32.2" height="16.4" viewBox="0 0 32.2 16.4"><path d="M2.600 4.199999999999999 L6.400 8.2 L2.600 12.2 Z" fill="#eaf8ff" stroke="#35aee8" stroke-width="0.900"/><path d="M29.800000000000004 4.199999999999999 L26.000000000000004 8.2 L29.800000000000004 12.2 Z" fill="#35aee8" stroke="#35aee8" stroke-width="0.500"/><text x="8.7" y="12.300" font-family="Liberation Sans, sans-serif" font-size="11.600" fill="#1a1a1a" stroke="#1a1a1a" stroke-width="0.200" textLength="13.4" lengthAdjust="spacingAndGlyphs">90</text></svg></div>
<div class="btn" style="left:640.6px;top:684px;width:32.2px;height:16.4px;"><svg width="32.2" height="16.4" viewBox="0 0 32.2 16.4"><path d="M2.600 4.199999999999999 L6.400 8.2 L2.600 12.2 Z" fill="#eaf8ff" stroke="#35aee8" stroke-width="0.900"/><path d="M29.800000000000004 4.199999999999999 L26.000000000000004 8.2 L29.800000000000004 12.2 Z" fill="#35aee8" stroke="#35aee8" stroke-width="0.500"/><text x="8.7" y="12.300" font-family="Liberation Sans, sans-serif" font-size="11.600" fill="#1a1a1a" stroke="#1a1a1a" stroke-width="0.200" textLength="13.4" lengthAdjust="spacingAndGlyphs">45</text></svg></div>
<div class="btn" style="left:705.4px;top:684px;width:32.2px;height:16.4px;"><svg width="32.2" height="16.4" viewBox="0 0 32.2 16.4"><path d="M3.400 4.600 L10.700 4.600 L10.700 1.200 L16.100 8.200 L10.700 15.200 L10.700 11.800 L3.400 11.800 Z" fill="#3cb6ea" stroke="#2aa6e0" stroke-width="0.800"/><path d="M28.800 4.600 L21.500 4.600 L21.500 1.200 L16.100 8.200 L21.500 15.200 L21.500 11.800 L28.800 11.800 Z" fill="#3cb6ea" stroke="#2aa6e0" stroke-width="0.800"/><path d="M11.400 4 L14.800 8.200 L11.400 12.400 L9.500 8.200 Z" fill="#dff5ff"/><path d="M20.800 4 L17.400 8.200 L20.800 12.400 L22.700 8.200 Z" fill="#dff5ff"/></svg></div>
<div class="btn" style="left:770.3px;top:684px;width:32.2px;height:16.4px;"><svg width="32.2" height="16.4" viewBox="0 0 32.2 16.4"><path d="M2.600 4.199999999999999 L6.400 8.2 L2.600 12.2 Z" fill="#eaf8ff" stroke="#35aee8" stroke-width="0.900"/><path d="M29.800000000000004 4.199999999999999 L26.000000000000004 8.2 L29.800000000000004 12.2 Z" fill="#35aee8" stroke="#35aee8" stroke-width="0.500"/><text x="8.7" y="12.300" font-family="Liberation Sans, sans-serif" font-size="11.600" fill="#1a1a1a" stroke="#1a1a1a" stroke-width="0.200" textLength="13.4" lengthAdjust="spacingAndGlyphs">45</text></svg></div>
<div class="btn" style="left:835.7px;top:684px;width:32.2px;height:16.4px;"><svg width="32.2" height="16.4" viewBox="0 0 32.2 16.4"><path d="M2.600 4.199999999999999 L6.400 8.2 L2.600 12.2 Z" fill="#eaf8ff" stroke="#35aee8" stroke-width="0.900"/><path d="M29.800000000000004 4.199999999999999 L26.000000000000004 8.2 L29.800000000000004 12.2 Z" fill="#35aee8" stroke="#35aee8" stroke-width="0.500"/><text x="8.7" y="12.300" font-family="Liberation Sans, sans-serif" font-size="11.600" fill="#1a1a1a" stroke="#1a1a1a" stroke-width="0.200" textLength="13.4" lengthAdjust="spacingAndGlyphs">90</text></svg></div>
<div class="btn" style="left:965.4px;top:684px;width:32.2px;height:16.4px;"><svg width="32.2" height="16.4" viewBox="0 0 32.2 16.4"><path d="M2.600 4.199999999999999 L6.400 8.2 L2.600 12.2 Z" fill="#eaf8ff" stroke="#35aee8" stroke-width="0.900"/><path d="M29.800000000000004 4.199999999999999 L26.000000000000004 8.2 L29.800000000000004 12.2 Z" fill="#35aee8" stroke="#35aee8" stroke-width="0.500"/><text x="7.6" y="12.300" font-family="Liberation Sans, sans-serif" font-size="11.600" fill="#1a1a1a" stroke="#1a1a1a" stroke-width="0.200" textLength="17.2" lengthAdjust="spacingAndGlyphs">180</text></svg></div>
<div class="tick" style="left:449.6px;top:707px;width:1px;height:4px;"></div><div class="tick" style="left:449.6px;top:729.500px;width:1px;height:4.500px;"></div>
<div class="tick" style="left:517.6px;top:707px;width:1px;height:4px;"></div><div class="tick" style="left:517.6px;top:729.500px;width:1px;height:4.500px;"></div>
<div class="tick" style="left:585.5px;top:707px;width:1px;height:4px;"></div><div class="tick" style="left:585.5px;top:729.500px;width:1px;height:4.500px;"></div>
<div class="tick" style="left:653.5px;top:707px;width:1px;height:4px;"></div><div class="tick" style="left:653.5px;top:729.500px;width:1px;height:4.500px;"></div>
<div class="tick" style="left:721.4px;top:707px;width:1px;height:4px;"></div><div class="tick" style="left:721.4px;top:729.500px;width:1px;height:4.500px;"></div>
<div class="tick" style="left:789.4px;top:707px;width:1px;height:4px;"></div><div class="tick" style="left:789.4px;top:729.500px;width:1px;height:4.500px;"></div>
<div class="tick" style="left:857.3px;top:707px;width:1px;height:4px;"></div><div class="tick" style="left:857.3px;top:729.500px;width:1px;height:4.500px;"></div>
<div class="tick" style="left:925.2px;top:707px;width:1px;height:4px;"></div><div class="tick" style="left:925.2px;top:729.500px;width:1px;height:4.500px;"></div>
<div class="tick" style="left:993.2px;top:707px;width:1px;height:4px;"></div><div class="tick" style="left:993.2px;top:729.500px;width:1px;height:4.500px;"></div>
<div class="abs" style="left:445.200px;top:717.400px;width:551.500px;height:2.400px;background:#6c9cdc;box-shadow:0 1px 0 #e2eefc;"></div>
<div class="abs thumb" style="left:717px;top:712.200px;width:10.500px;height:15.400px;"></div>
<div class="btn" style="left:446.2px;top:741px;width:31.8px;height:31.6px;"><svg width="31.8" height="31.6" viewBox="0 0 31.8 31.6"><path d="M4.900 15.300 L16.200 5.200 L16.200 9.700 L27 9.700 L27 21 L16.200 21 L16.200 26.200 Z" fill="url(#hb)" stroke="#27a5e8" stroke-width="1.300" stroke-linejoin="miter"/><path d="M27 9.700 L27 21" stroke="#1e98dc" stroke-width="1.800"/><path d="M13.5 15.3 L21.9 15.3" stroke="#f01828" stroke-width="2.6"/></svg></div>
<div class="btn" style="left:511.6px;top:741px;width:31.8px;height:31.6px;"><svg width="31.8" height="31.6" viewBox="0 0 31.8 31.6"><path d="M4 15.300 L10 9.700 L10 12 L15.300 12 L15.300 19 L10 19 L10 21.700 Z" fill="url(#hb)" stroke="#27a5e8" stroke-width="1.300" stroke-linejoin="miter"/><path d="M8.9 15.3 L13.700000000000001 15.3" stroke="#f01828" stroke-width="1.7"/><text x="16.8" y="23.2" font-family="Liberation Sans, sans-serif" font-size="21" fill="#111" textLength="9.8" lengthAdjust="spacingAndGlyphs">7</text></svg></div>
<div class="btn" style="left:900.5px;top:741px;width:31.8px;height:31.6px;"><svg width="31.8" height="31.6" viewBox="0 0 31.8 31.6"><text x="4.3" y="23.2" font-family="Liberation Sans, sans-serif" font-size="21" fill="#111" textLength="9" lengthAdjust="spacingAndGlyphs">7</text><path d="M27.300 15.500 L19.500 9.700 L19.500 12 L13.800 12 L13.800 19 L19.500 19 L19.500 22.200 Z" fill="url(#hb)" stroke="#27a5e8" stroke-width="1.300" stroke-linejoin="miter"/><path d="M17.0 15.5 L22.0 15.5 M19.5 13.0 L19.5 18.0" stroke="#f01828" stroke-width="1.7"/></svg></div>
<div class="btn" style="left:965.4px;top:741px;width:31.8px;height:31.6px;"><svg width="31.8" height="31.6" viewBox="0 0 31.8 31.6"><path d="M26.600 15.500 L15.300 5.200 L15.300 9.300 L4.800 9.300 L4.800 21.700 L15.300 21.700 L15.300 26.200 Z" fill="url(#hb)" stroke="#27a5e8" stroke-width="1.300" stroke-linejoin="miter"/><path d="M4.800 9.300 L4.800 21.700" stroke="#1e98dc" stroke-width="1.800"/><path d="M9.600000000000001 15.8 L18.0 15.8 M13.8 11.600000000000001 L13.8 20.0" stroke="#f01828" stroke-width="2.6"/></svg></div>
<div class="fld" style="left:677.600px;top:747.800px;width:87.500px;height:17.500px;line-height:15.500px;">0.00</div>
<div class="btn" style="left:1051.4px;top:564.9px;width:55.4px;height:56px;background:linear-gradient(#f8a440,#f79a2c 30%,#f6911b 48%,#f89c2e 62%,#fab458);border-color:#e2a866 #eeb06a #f6c283 #eeb06a;box-shadow:0 0 0 1px #f0cfa4;"><svg width="55.4" height="56" viewBox="0 0 55.4 56"><circle cx="27.700" cy="27.400" r="22.300" fill="#11a845" stroke="#0c8f38" stroke-width="1.200"/><g transform="rotate(10 27 20)"><rect x="17" y="12.500" width="8" height="11" rx="1.500" fill="#f6c04a" stroke="#f9dc96" stroke-width="1"/><rect x="19.300" y="15" width="3.400" height="6" fill="#fff6d8"/><rect x="25.500" y="16" width="14" height="7" fill="#9a9a8a"/><path d="M27.500 18 L27.500 21 M30 18 L30 21 M32.500 18 L32.500 21 M35 18 L35 21 M37.500 18 L37.500 21" stroke="#d8d8cc" stroke-width="1"/></g><text x="13.700" y="39.800" font-family="Liberation Sans, sans-serif" font-weight="bold" font-size="11.600" fill="#f2fff2" stroke="#f2fff2" stroke-width="0.500" textLength="28" lengthAdjust="spacingAndGlyphs">SLICE</text><path d="M27.800 31.200 L27.800 43.800 L30.700 41 L33 46.200 L35.200 45.200 L32.900 40.200 L36.800 40 Z" fill="#000" stroke="#fff" stroke-width="1.100" stroke-linejoin="round"/></svg></div>
<svg class="abs" style="left:1120px;top:562px" width="54" height="62" viewBox="1120 562 54 62"><g transform="rotate(20 1146.500 592)"><path d="M1146.500 564 L1146.500 620" stroke="#a8e860" stroke-width="2" opacity="0.900"/><path d="M1134.300 577 L1134.300 607 A12.200 4.600 0 0 0 1158.700 607 L1158.700 577 Z" fill="url(#cylg)" stroke="#0a9030" stroke-width="1"/><ellipse cx="1146.500" cy="577" rx="12.200" ry="4.600" fill="#18a83a" stroke="#0a9030" stroke-width="1.200"/><path d="M1134.300 607 A12.200 4.600 0 0 1 1158.700 607" fill="none" stroke="#0c9a34" stroke-width="0.800" opacity="0.800"/><path d="M1146.500 566 L1146.500 577" stroke="#a8e860" stroke-width="1.600"/></g></svg>
<div class="abs radio" style="left:1058.500px;top:649.500px;"><i></i></div><div class="txt" style="left:1075px;top:646px;">Slice</div>
<div class="abs radio" style="left:1111.500px;top:649.500px;opacity:.75;"></div><div class="txt" style="left:1127.500px;top:646px;">Bisect</div>
<div class="abs chk" style="left:1057px;top:694px;"><svg width="10" height="10"><path d="M2.500 4.500 L4.500 7.500 L8 2" stroke="#6a6e76" stroke-width="1.300" fill="none"/></svg></div><div class="txt" style="left:1072px;top:691px;">Slice Plane</div>
<div class="abs chk" style="left:1057px;top:711px;"><svg width="10" height="10"><path d="M2.500 4.500 L4.500 7.500 L8 2" stroke="#6a6e76" stroke-width="1.300" fill="none"/></svg></div><div class="txt" style="left:1072px;top:708px;">Reference Plane</div>
<div class="abs chk" style="left:1057px;top:727.7px;"><svg width="10" height="10"><path d="M2.500 4.500 L4.500 7.500 L8 2" stroke="#6a6e76" stroke-width="1.300" fill="none"/></svg></div><div class="txt" style="left:1072px;top:724.7px;">Vertical Axis</div>
<div class="txt" style="left:1055px;top:743px;">Colorize@</div>
<div class="fld" style="left:1119.500px;top:743.300px;width:49.500px;height:17.500px;line-height:15.500px;text-align:left;padding-left:4px;font-size:13px;">7</div>
<svg class="abs" style="left:1158px;top:749px" width="8" height="5"><path d="M1 1 L7 1 L4 4 Z" fill="#555"/></svg>

<div class="abs" style="left:10px;top:792px;width:1180px;height:1px;background:#a3bad8;"></div>
<div class="abs" style="left:10px;top:793px;width:1180px;height:1px;background:#e8f1fc;"></div>
<div class="btn fb" style="left:961px;top:806px;width:72px;height:21px;">&lt; <u>B</u>ack</div>
<div class="btn fb" style="left:1040px;top:806px;width:71px;height:21px;border-color:#cdc696;box-shadow:0 0 0 1px #f6f1cc;"><u>N</u>ext &gt;</div>
<div class="btn fb" style="left:1118px;top:806px;width:72px;height:21px;">Cancel</div>

</div>
<div id="edge"></div>
<div class="abs" style="left:1199px;top:29px;width:1px;height:800px;background:#9cb8da;"></div>
</body>
</html>
